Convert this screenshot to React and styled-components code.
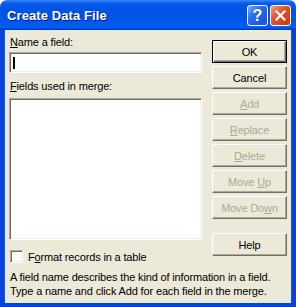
import React from "react";
import styled, { createGlobalStyle, css } from "styled-components";

const Global = createGlobalStyle`
  html, body { margin: 0; padding: 0; background: #ffffff; }
  body { font-family: "Liberation Sans", Arial, sans-serif; }
`;

const Window = styled.div`
  width: 296px;
  height: 307px;
  display: flex;
  flex-direction: column;
  box-sizing: border-box;
  font-family: "Liberation Sans", Arial, sans-serif;
  font-size: 11px;
  letter-spacing: -0.15px;
  color: #000;
`;

const TitleBar = styled.div`
  height: 30px;
  flex: none;
  box-sizing: border-box;
  display: flex;
  align-items: center;
  padding: 0 5px 0 7px;
  border-radius: 7px 7px 0 0;
  background: linear-gradient(
    to bottom,
    #3a8cff 0px,
    #1767f5 2px,
    #0458e8 4px,
    #0055e5 8px,
    #0054e3 16px,
    #0058ee 24px,
    #0063fb 27px,
    #0046d5 29px,
    #0034b8 30px
  );
`;

const Title = styled.div`
  flex: 1;
  color: #fff;
  font-weight: bold;
  font-size: 13px;
  letter-spacing: 0.1px;
  text-shadow: 1px 1px 0 #0a1883;
  margin-top: 1px;
`;

const CaptionButton = styled.div`
  width: 21px;
  height: 21px;
  box-sizing: border-box;
  border: 1px solid #fff;
  border-radius: 3px;
  display: flex;
  align-items: center;
  justify-content: center;
  margin-left: 2px;
  margin-top: 1px;
  ${(p) =>
    p.$variant === "close"
      ? css`
          background: linear-gradient(135deg, #f4a185 0%, #e65a32 35%, #d8421a 70%, #c83a14 100%);
        `
      : css`
          background: linear-gradient(135deg, #7ab0ff 0%, #2d6ff1 35%, #1c5ce6 70%, #1f57d6 100%);
        `}
`;

const HelpGlyph = styled.span`
  color: #fff;
  font-weight: bold;
  font-size: 16px;
  line-height: 1;
  letter-spacing: 0;
  font-family: "Liberation Sans", Arial, sans-serif;
  margin-top: 1px;
`;

const Client = styled.div`
  flex: 1;
  background: #ece9d8;
  border-left: 4px solid #0842d9;
  border-right: 4px solid #0842d9;
  border-bottom: 4px solid #0842d9;
  box-shadow: inset 1px 0 0 #0b5bef, inset -1px 0 0 #0b5bef;
  padding: 6px 5px 0 5px;
  display: flex;
  flex-direction: column;
`;

const Main = styled.div`
  display: grid;
  grid-template-columns: 193px 75px;
  column-gap: 10px;
  align-items: start;
`;

const LeftCol = styled.div`
  display: flex;
  flex-direction: column;
`;

const Label = styled.div`
  height: 13px;
  line-height: 13px;
  margin-top: ${(p) => p.$mt || 0}px;
  margin-left: 1px;
`;

const Sunken = css`
  box-sizing: border-box;
  background: #fff;
  border: 1px solid;
  border-color: #aca899 #ffffff #ffffff #aca899;
  box-shadow: inset 1px 1px 0 #716f64, inset -1px -1px 0 #f1efe2;
`;

const TextBox = styled.div`
  ${Sunken};
  height: 21px;
  margin-top: 3px;
  display: flex;
  align-items: center;
  padding-left: 3px;
`;

const Caret = styled.span`
  width: 2px;
  height: 12px;
  background: #000;
`;

const ListBox = styled.div`
  ${Sunken};
  height: 142px;
  margin-top: 5px;
`;

const CheckRow = styled.label`
  display: flex;
  align-items: center;
  height: 13px;
  margin-top: 10px;
  padding-left: 1px;
  gap: 5px;
`;

const CheckBox = styled.span`
  ${Sunken};
  width: 13px;
  height: 13px;
  flex: none;
`;

const ButtonCol = styled.div`
  display: flex;
  flex-direction: column;
  gap: 3px;
  padding-top: 4px;
`;

const Button = styled.div`
  height: 23px;
  box-sizing: border-box;
  background: #ece9d8;
  display: flex;
  align-items: center;
  justify-content: center;
  color: ${(p) => (p.$disabled ? "#aca899" : "#000")};
  margin-top: ${(p) => p.$mt || 0}px;
  ${(p) =>
    p.$default
      ? css`
          border: 1px solid #000;
          box-shadow: inset 1px 1px 0 #fff, inset -1px -1px 0 #716f64, inset -2px -2px 0 #aca899;
        `
      : css`
          border: 1px solid;
          border-color: #fff #716f64 #716f64 #fff;
          box-shadow: inset -1px -1px 0 #aca899;
        `}
`;

const ButtonText = styled.span`
  white-space: pre;
`;

const Description = styled.div`
  margin-top: 7px;
  line-height: 14px;
  margin-left: 1px;
`;

const U = styled.span`
  text-decoration: underline;
`;

export default function App() {
  return (
    <>
      <Global />
      <Window>
        <TitleBar>
          <Title>Create Data File</Title>
          <CaptionButton $variant="help">
            <HelpGlyph>?</HelpGlyph>
          </CaptionButton>
          <CaptionButton $variant="close">
            <svg width="11" height="11" viewBox="0 0 11 11">
              <path d="M1.5 1.5 L9.5 9.5 M9.5 1.5 L1.5 9.5" stroke="#fff" strokeWidth="2.2" strokeLinecap="square" />
            </svg>
          </CaptionButton>
        </TitleBar>
        <Client>
          <Main>
            <LeftCol>
              <Label>
                <U>N</U>ame a field:
              </Label>
              <TextBox>
                <Caret />
              </TextBox>
              <Label $mt={7}>
                <U>F</U>ields used in merge:
              </Label>
              <ListBox />
              <CheckRow>
                <CheckBox />
                <span>
                  F<U>o</U>rmat records in a table
                </span>
              </CheckRow>
            </LeftCol>
            <ButtonCol>
              <Button $default>
                <ButtonText>OK</ButtonText>
              </Button>
              <Button>
                <ButtonText>Cancel</ButtonText>
              </Button>
              <Button $disabled>
                <ButtonText>
                  <U>A</U>dd
                </ButtonText>
              </Button>
              <Button $disabled>
                <ButtonText>
                  <U>R</U>eplace
                </ButtonText>
              </Button>
              <Button $disabled>
                <ButtonText>
                  <U>D</U>elete
                </ButtonText>
              </Button>
              <Button $disabled>
                <ButtonText>
                  {"Move "}
                  <U>U</U>p
                </ButtonText>
              </Button>
              <Button $disabled>
                <ButtonText>
                  {"Move Do"}
                  <U>w</U>n
                </ButtonText>
              </Button>
              <Button $mt={11}>
                <ButtonText>Help</ButtonText>
              </Button>
            </ButtonCol>
          </Main>
          <Description>
            A field name describes the kind of information in a field.
            <br />
            Type a name and click Add for each field in the merge.
          </Description>
        </Client>
      </Window>
    </>
  );
}
